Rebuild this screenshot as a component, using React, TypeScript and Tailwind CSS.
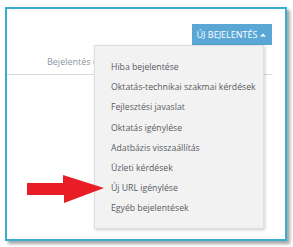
import React from "react"

const items = [
  "Hiba bejelentése",
  "Oktatás-technikai szakmai kérdések",
  "Fejlesztési javaslat",
  "Oktatás igénylése",
  "Adatbázis visszaállítás",
  "Üzleti kérdések",
  "Új URL igénylése",
  "Egyéb bejelentések",
]

export default function App() {
  return (
    <div className="w-[293px] h-[247px] bg-white pl-[5px] pt-[7px]" style={{ fontFamily: '"Open Sans", "Liberation Sans", sans-serif' }}>
      <div className="relative w-[282px] h-[234px] border-2 border-[#3aaed2] bg-white shadow-[3px_3px_3px_rgba(0,0,0,0.35)]">
        {/* header */}
        <div className="flex justify-end pt-[15px] pr-[13px]">
          <button className="h-[21px] w-[80px] bg-[#5aa7d6] text-white text-[9px] flex items-center justify-center gap-[2px]">
            <span>ÚJ BEJELENTÉS</span>
            <svg width="8" height="6" viewBox="0 0 8 6"><path d="M1 4.5 L4 1.5 L7 4.5 Z" fill="white" /></svg>
          </button>
        </div>

        {/* tabs row */}
        <div className="mt-[10px] mr-[13px] h-[20px] border-b border-[#d3dde5] pl-[40px] text-[9px] text-[#8a96a3] leading-[14px]">
          Bejelentés c
        </div>

        {/* dropdown */}
        <div className="absolute left-[87px] top-[36px] w-[170px] h-[184px] bg-[#f2f2f2] border border-[#dedede] shadow-[1px_1px_3px_rgba(0,0,0,0.2)] pt-[12px]">
          {items.map((t) => (
            <div key={t} className="h-[20.2px] pl-[16px] text-[8.7px] leading-[18px] text-[#575b62] whitespace-nowrap">
              {t}
            </div>
          ))}
        </div>

        {/* red arrow */}
        <svg className="absolute left-[20px] top-[166px]" width="78" height="30" viewBox="0 0 78 30">
          <path d="M0 8 L36 8 L36 0 L77 13 L37 28 L37 20 L0 20 Z" fill="#e81d25" />
        </svg>
      </div>
    </div>
  )
}
